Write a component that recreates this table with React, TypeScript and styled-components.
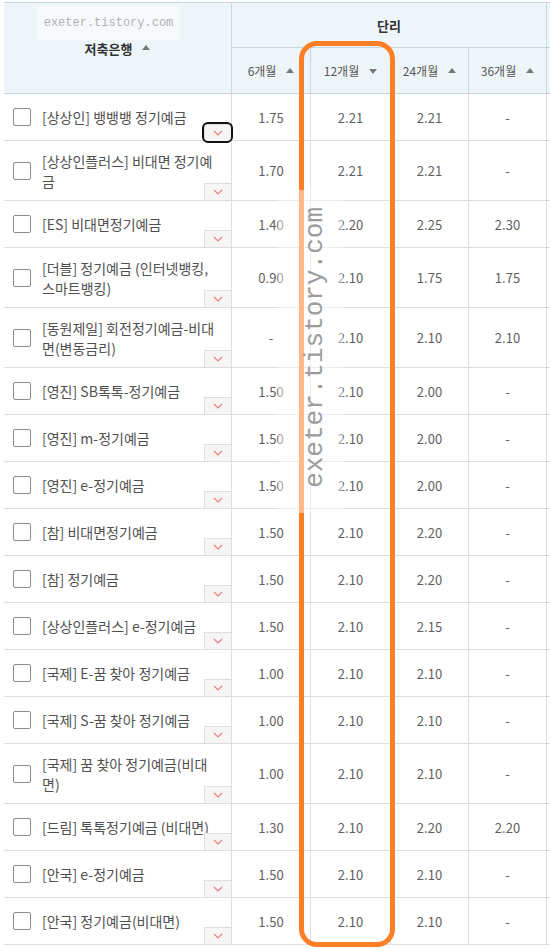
import React from 'react';
import styled, { createGlobalStyle } from 'styled-components';

const GlobalStyle = createGlobalStyle`
  html, body {
    margin: 0;
    padding: 0;
    background: #fff;
    overflow: hidden;
  }
  body {
    font-family: "Noto Sans CJK KR", "Noto Sans", sans-serif;
  }
`;

const COLS = '228px 79px 80px 78px 78px 78px';
const HEAD_LINE = '#c9d5e0';
const BODY_LINE = '#dedede';

type Deposit = { name: string[]; rates: string[] };

const deposits: Deposit[] = [
  { name: ['[상상인] 뱅뱅뱅 정기예금'], rates: ['1.75', '2.21', '2.21', '-'] },
  { name: ['[상상인플러스] 비대면 정기예', '금'], rates: ['1.70', '2.21', '2.21', '-'] },
  { name: ['[ES] 비대면정기예금'], rates: ['1.40', '2.20', '2.25', '2.30'] },
  { name: ['[더블] 정기예금 (인터넷뱅킹,', '스마트뱅킹)'], rates: ['0.90', '2.10', '1.75', '1.75'] },
  { name: ['[동원제일] 회전정기예금-비대', '면(변동금리)'], rates: ['-', '2.10', '2.10', '2.10'] },
  { name: ['[영진] SB톡톡-정기예금'], rates: ['1.50', '2.10', '2.00', '-'] },
  { name: ['[영진] m-정기예금'], rates: ['1.50', '2.10', '2.00', '-'] },
  { name: ['[영진] e-정기예금'], rates: ['1.50', '2.10', '2.00', '-'] },
  { name: ['[참] 비대면정기예금'], rates: ['1.50', '2.10', '2.20', '-'] },
  { name: ['[참] 정기예금'], rates: ['1.50', '2.10', '2.20', '-'] },
  { name: ['[상상인플러스] e-정기예금'], rates: ['1.50', '2.10', '2.15', '-'] },
  { name: ['[국제] E-꿈 찾아 정기예금'], rates: ['1.00', '2.10', '2.10', '-'] },
  { name: ['[국제] S-꿈 찾아 정기예금'], rates: ['1.00', '2.10', '2.10', '-'] },
  { name: ['[국제] 꿈 찾아 정기예금(비대', '면)'], rates: ['1.00', '2.10', '2.10', '-'] },
  { name: ['[드림] 톡톡정기예금 (비대면)'], rates: ['1.30', '2.10', '2.20', '2.20'] },
  { name: ['[안국] e-정기예금'], rates: ['1.50', '2.10', '2.10', '-'] },
  { name: ['[안국] 정기예금(비대면)'], rates: ['1.50', '2.10', '2.10', '-'] },
];

const terms = [
  { label: '6개월', down: false },
  { label: '12개월', down: true },
  { label: '24개월', down: false },
  { label: '36개월', down: false },
];

const Page = styled.div`
  position: relative;
  width: 550px;
  height: 949px;
  overflow: hidden;
  box-sizing: border-box;
  padding: 2px 0 0 4px;
`;

const Table = styled.div`
  width: 621px;
  display: flex;
  flex-direction: column;
`;

const Head = styled.div`
  display: grid;
  grid-template-columns: ${COLS};
  grid-template-rows: 45px 46px;
  background: #eef5f8;
  border-top: 1px solid ${HEAD_LINE};
`;

const HeadCell = styled.div<{ $col: string; $row: string; $bold?: boolean }>`
  grid-column: ${p => p.$col};
  grid-row: ${p => p.$row};
  display: flex;
  align-items: center;
  justify-content: center;
  gap: 10px;
  box-sizing: border-box;
  border-right: 1px solid ${HEAD_LINE};
  border-bottom: 1px solid ${HEAD_LINE};
  font-size: ${p => (p.$bold ? '13px' : '12px')};
  font-weight: ${p => (p.$bold ? 700 : 400)};
  color: ${p => (p.$bold ? '#333' : '#555')};
`;

const SortArrow = styled.span<{ $down?: boolean }>`
  width: 0;
  height: 0;
  border-left: 4px solid transparent;
  border-right: 4px solid transparent;
  ${p =>
    p.$down
      ? 'border-top: 5px solid #777;'
      : 'border-bottom: 5px solid #777;'}
  margin-top: ${p => (p.$down ? '1px' : '-1px')};
`;

const Row = styled.div<{ $tall: boolean }>`
  display: grid;
  grid-template-columns: ${COLS};
  height: ${p => (p.$tall ? '60px' : '47px')};
  box-sizing: border-box;
  border-bottom: 1px solid ${BODY_LINE};
`;

const NameCell = styled.div`
  position: relative;
  display: flex;
  align-items: center;
  gap: 11px;
  padding-left: 9px;
  box-sizing: border-box;
  border-right: 1px solid ${BODY_LINE};
`;

const Check = styled.span`
  flex: none;
  width: 18px;
  height: 18px;
  box-sizing: border-box;
  border: 1px solid #8c8c8c;
  border-radius: 2px;
  background: #fff;
`;

const Name = styled.div`
  font-size: 14px;
  line-height: 20px;
  color: #505050;
  white-space: nowrap;
`;

const Toggle = styled.span<{ $focused?: boolean }>`
  position: absolute;
  right: 0;
  bottom: 0;
  width: 27px;
  height: 17px;
  box-sizing: border-box;
  display: flex;
  align-items: center;
  justify-content: center;
  background: #f5f5f5;
  border-top: 1px solid ${BODY_LINE};
  border-left: 1px solid ${BODY_LINE};
  ${p =>
    p.$focused &&
    `outline: 2px solid #111; outline-offset: 0; border-radius: 4px; bottom: -1px;`}
`;

const RateCell = styled.div`
  display: flex;
  align-items: center;
  justify-content: center;
  box-sizing: border-box;
  border-right: 1px solid ${BODY_LINE};
  font-size: 13px;
  color: #5e5e5e;
`;

const Highlight = styled.div`
  position: absolute;
  left: 299px;
  top: 41px;
  width: 96px;
  height: 906px;
  box-sizing: border-box;
  border: 5px solid #ff7f27;
  border-radius: 18px;
  pointer-events: none;
`;

const Mark = styled.div`
  position: absolute;
  left: 37px;
  top: 6px;
  width: 143px;
  height: 34px;
  display: flex;
  align-items: center;
  justify-content: center;
  background: rgba(255, 255, 255, 0.45);
  font-family: "Liberation Mono", "DejaVu Sans Mono", monospace;
  font-size: 12px;
  color: #b2b2b2;
`;

const SideMark = styled.div`
  position: absolute;
  left: 278px;
  top: 190px;
  width: 65px;
  height: 323px;
  display: flex;
  align-items: center;
  justify-content: center;
  background: rgba(255, 255, 255, 0.45);
  font-family: "Liberation Mono", "DejaVu Sans Mono", monospace;
  font-size: 26px;
  color: #9c9c9c;
  span {
    writing-mode: vertical-rl;
    transform: rotate(180deg);
    margin-left: 8px;
    margin-top: -8px;
  }
`;

const Chevron = () => (
  <svg width="10" height="6" viewBox="0 0 10 6">
    <path d="M1 1l4 4 4-4" fill="none" stroke="#ef7b7b" strokeWidth="1.1" />
  </svg>
);

export default function App() {
  return (
    <Page>
      <GlobalStyle />
      <Table>
        <Head>
          <HeadCell $col="1" $row="1 / 3" $bold>
            저축은행 <SortArrow />
          </HeadCell>
          <HeadCell $col="2 / 6" $row="1" $bold>
            단리
          </HeadCell>
          <HeadCell $col="6" $row="1" />
          {terms.map((t, i) => (
            <HeadCell key={t.label} $col={String(i + 2)} $row="2">
              {t.label} <SortArrow $down={t.down} />
            </HeadCell>
          ))}
          <HeadCell $col="6" $row="2" />
        </Head>
        {deposits.map((d, idx) => (
          <Row key={idx} $tall={d.name.length > 1}>
            <NameCell>
              <Check />
              <Name>
                {d.name.map((line, i) => (
                  <div key={i}>{line}</div>
                ))}
              </Name>
              <Toggle $focused={idx === 0}>
                <Chevron />
              </Toggle>
            </NameCell>
            {d.rates.map((r, i) => (
              <RateCell key={i}>{r}</RateCell>
            ))}
            <RateCell />
          </Row>
        ))}
      </Table>
      <Highlight />
      <Mark>exeter.tistory.com</Mark>
      <SideMark>
        <span>exeter.tistory.com</span>
      </SideMark>
    </Page>
  );
}
